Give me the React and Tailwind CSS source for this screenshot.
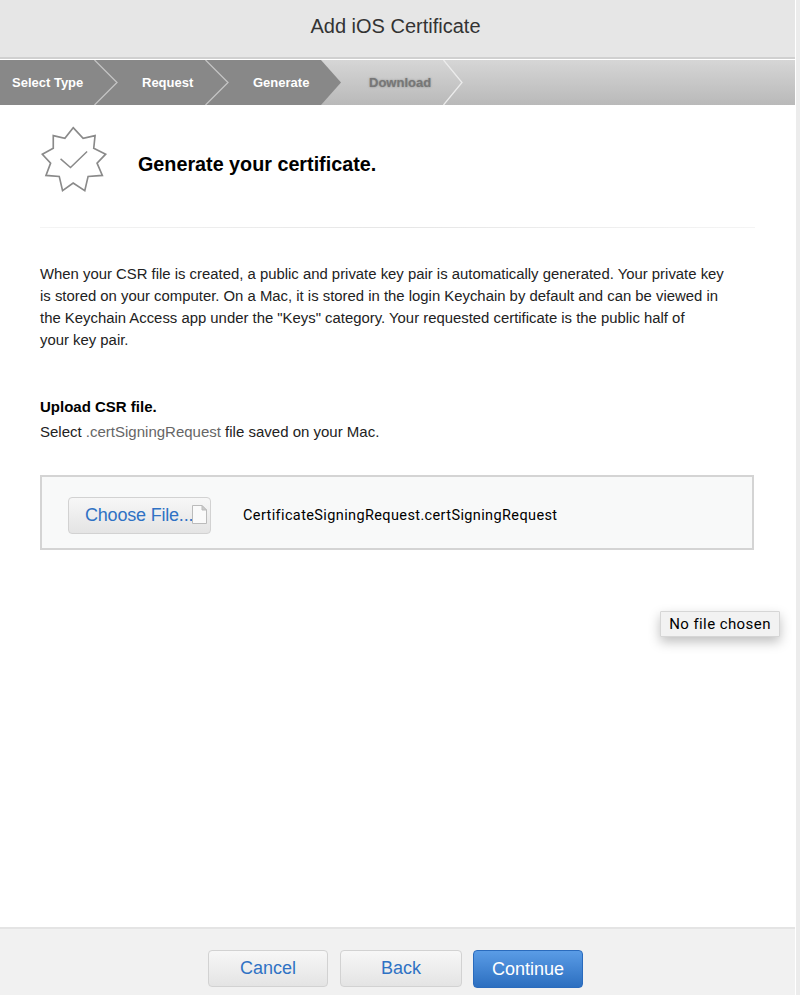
export default function App() {
  const sans = "font-['Liberation_Sans',Arial,sans-serif]";
  const btn = "h-[37px] rounded-[4px] border border-[#d2d2d2] bg-gradient-to-b from-[#f7f7f7] to-[#e4e4e4] text-[18px] text-[#2f72c4] flex items-center justify-center";
  return (
    <div className={`${sans} relative h-[995px] w-[800px] overflow-hidden bg-[#ececec]`}>
      <div className="flex h-full w-[796px] flex-col bg-white pr-px">
        <header className="flex h-[59px] shrink-0 items-center justify-center border-b-2 border-[#d0d0d0] bg-[#e6e6e6] pb-[6px] pr-[4px] text-[20px] text-[#333]">
          Add iOS Certificate
        </header>
        <nav className="relative mt-px flex h-[45px] shrink-0 items-center bg-gradient-to-b from-[#d6d6d6] to-[#b9b9b9] text-[13px] font-bold text-white">
          <div className="absolute inset-y-0 left-0 w-[341px] bg-[#888] [clip-path:polygon(0_0,321px_0,341px_50%,321px_100%,0_100%)]" />
          <svg className="absolute left-0 top-0" width="480" height="45" fill="none" strokeWidth="1.3">
            <path d="M94.5 0 L117 22.5 L94.5 45" stroke="#c4c4c4" />
            <path d="M205.5 0 L228 22.5 L205.5 45" stroke="#c4c4c4" />
            <path d="M443.5 0 L462 22.5 L443.5 45" stroke="#ececec" />
          </svg>
          <span className="relative ml-[12px] w-[130px]">Select Type</span>
          <span className="relative w-[111px]">Request</span>
          <span className="relative w-[116px]">Generate</span>
          <span className="relative text-[#777] [text-shadow:0_0_2px_rgba(90,90,90,0.6)]">Download</span>
        </nav>
        <main className="flex-1 px-[40px]">
          <div className="flex h-[122px] items-start pt-[20px]">
            <svg width="68" height="68" viewBox="60 30 205 205" fill="none">
              <path d="M160 38 L190 70 L226 62 L222 100 L258 118 L232 145 L248 182 L205 185 L195 228 L160 205 L128 228 L118 185 L78 182 L92 145 L67 118 L100 100 L100 62 L135 70 Z" stroke="#8a8a8a" strokeWidth="5" />
              <path d="M122 132 L152 158 L202 110" stroke="#8a8a8a" strokeWidth="4.5" />
            </svg>
            <h1 className="ml-[30px] mt-[27px] text-[19.75px] font-bold leading-[24px] text-black">Generate your certificate.</h1>
          </div>
          <div className="h-px w-[715px] bg-gradient-to-r from-[#f4f4f4] via-[#e6e6e6] to-[#f4f4f4]" />
          <p className="mt-[35px] w-[700px] text-[14.88px] leading-[22px] text-[#222]">
            When your CSR file is created, a public and private key pair is automatically generated. Your private key<br />
            is stored on your computer. On a Mac, it is stored in the login Keychain by default and can be viewed in<br />
            the Keychain Access app under the "Keys" category. Your requested certificate is the public half of<br />
            your key pair.
          </p>
          <h2 className="mt-[45px] text-[15px] font-bold leading-[22px] text-black">Upload CSR file.</h2>
          <p className="mt-[3px] text-[15px] leading-[22px] text-[#222]">
            Select <span className="text-[#666]">.certSigningRequest</span> file saved on your Mac.
          </p>
          <div className="mt-[32px] flex h-[75px] w-[714px] items-center border-2 border-[#d4d4d4] bg-[#f8f9f9] pl-[26px] pt-[5px]">
            <div className={`${btn} relative w-[143px] justify-start pl-[16px] text-[17px] tracking-[-0.2px]`}>
              Choose File...
              <svg className="absolute left-[123px] top-[7px]" width="15" height="19" viewBox="0 0 15 19" fill="none">
                <path d="M.5.5H10L14.5 5V18.5H.5Z" fill="#fafafa" stroke="#bbb" />
                <path d="M10 .5V5H14.5Z" fill="#ccc" stroke="#bbb" />
              </svg>
            </div>
            <span className="ml-[32px] mt-px font-['Roboto',sans-serif] text-[14.5px] tracking-[0.38px] text-black">CertificateSigningRequest.certSigningRequest</span>
          </div>
        </main>
        <footer className="flex h-[68px] shrink-0 items-start justify-center gap-[11px] border-t-2 border-[#e4e4e4] bg-[#f1f1f1] pt-[21px] pr-[5px]">
          <div className={`${btn} mr-px w-[120px] pl-px`}>Cancel</div>
          <div className={`${btn} w-[122px] pl-px`}>Back</div>
          <div className="flex h-[38px] w-[110px] items-center justify-center rounded-[4px] border border-[#2a6bbd] bg-gradient-to-b from-[#5a9ce6] to-[#2c6fc0] pl-px text-[18px] text-white">Continue</div>
        </footer>
      </div>
      <div className="absolute left-[660px] top-[611px] flex h-[26px] w-[120px] items-center justify-center rounded-[1px] border border-[#d6d6d6] bg-[#f2f2f2] font-['Roboto',sans-serif] text-[15px] tracking-[0.42px] text-black shadow-[0_5px_12px_rgba(0,0,0,0.25)]">
        No file chosen
      </div>
    </div>
  );
}
